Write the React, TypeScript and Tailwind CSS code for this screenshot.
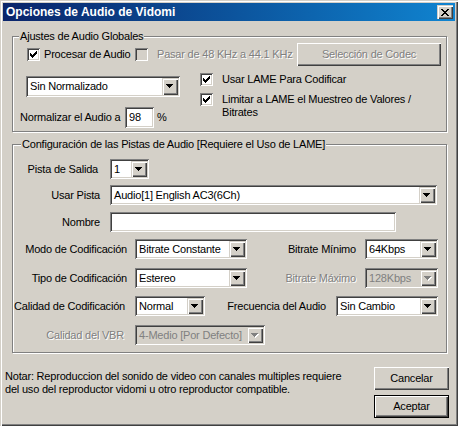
import type { ReactNode } from 'react'

const sunken =
  'shadow-[inset_1px_1px_0_#808080,inset_-1px_-1px_0_#fff,inset_2px_2px_0_#404040,inset_-2px_-2px_0_#D4D0C8]'
const raised =
  'shadow-[inset_1px_1px_0_#D4D0C8,inset_2px_2px_0_#fff,inset_-1px_-1px_0_#404040,inset_-2px_-2px_0_#808080]'
const etched = 'border border-[#808080] shadow-[1px_1px_0_#fff,inset_1px_1px_0_#fff]'
const dim = 'text-[#808080] [text-shadow:1px_1px_0_#fff]'

const ARROW = 'M0 0h7v1h-7zM1 1h5v1h-5zM2 2h3v1h-3zM3 3h1v1h-1z'

function Arrow({ disabled }: { disabled?: boolean }) {
  return (
    <svg width="8" height="5" viewBox="0 0 8 5" shapeRendering="crispEdges">
      {disabled && <path d={ARROW} fill="#fff" transform="translate(1 1)" />}
      <path d={ARROW} fill={disabled ? '#808080' : '#000'} />
    </svg>
  )
}

function Check({ checked, disabled }: { checked?: boolean; disabled?: boolean }) {
  return (
    <span
      className={`flex h-[13px] w-[13px] shrink-0 items-center justify-center ${sunken} ${
        disabled ? 'bg-[#D4D0C8]' : 'bg-white'
      }`}
    >
      {checked && (
        <svg width="7" height="7" viewBox="0 0 7 7" shapeRendering="crispEdges">
          <path d="M0 2h1v3h-1zM1 3h1v3h-1zM2 4h1v3h-1zM3 3h1v3h-1zM4 2h1v3h-1zM5 1h1v3h-1zM6 0h1v3h-1z" />
        </svg>
      )}
    </span>
  )
}

function Combo({ value, className, disabled }: { value: string; className: string; disabled?: boolean }) {
  return (
    <div className={`flex shrink-0 p-[2px] ${sunken} ${className} ${disabled ? 'bg-[#D4D0C8] text-[#808080]' : 'bg-white'}`}>
      <div className="flex flex-1 items-center overflow-hidden whitespace-nowrap pl-[2px]">{value}</div>
      <div className={`flex w-[16px] items-center justify-center bg-[#D4D0C8] ${raised}`}>
        <Arrow disabled={disabled} />
      </div>
    </div>
  )
}

function Edit({ value, className }: { value?: string; className: string }) {
  return (
    <div className={`flex shrink-0 items-center bg-white p-[2px] pl-[4px] ${sunken} ${className}`}>{value}</div>
  )
}

function Btn({ children, className, def, disabled }: { children: ReactNode; className: string; def?: boolean; disabled?: boolean }) {
  const face = (
    <div
      className={`flex h-full w-full items-center justify-center bg-[#D4D0C8] ${
        def
          ? 'shadow-[inset_1px_1px_0_#fff,inset_-1px_-1px_0_#404040,inset_-2px_-2px_0_#808080]'
          : 'shadow-[inset_1px_1px_0_#fff,inset_-1px_-1px_0_#404040,inset_-2px_-2px_0_#808080]'
      } ${disabled ? dim : ''}`}
    >
      {children}
    </div>
  )
  return <div className={`shrink-0 ${def ? 'border border-black' : ''} ${className}`}>{face}</div>
}

function CloseIcon() {
  return (
    <svg width="8" height="7" viewBox="0 0 8 7" shapeRendering="crispEdges">
      <path d="M0 0h2v1h-2zM6 0h2v1h-2zM1 1h2v1h-2zM5 1h2v1h-2zM2 2h4v1h-4zM3 3h2v1h-2zM2 4h4v1h-4zM1 5h2v1h-2zM5 5h2v1h-2zM0 6h2v1h-2zM6 6h2v1h-2z" />
    </svg>
  )
}

export default function App() {
  return (
    <div
      className={`h-[426px] w-[458px] bg-[#D4D0C8] p-[3px] font-['Liberation_Sans',Arial,sans-serif] text-[11px] leading-[13px] tracking-[-0.2px] text-black ${raised}`}
    >
      {/* title bar */}
      <div className="flex h-[18px] items-center justify-between bg-gradient-to-r from-[#0A246A] to-[#1084D0] pl-[3px] pr-[2px]">
        <span className="text-[12px] font-bold tracking-normal text-white">Opciones de Audio de Vidomi</span>
        <div className={`flex h-[14px] w-[16px] items-center justify-center bg-[#D4D0C8] ${raised}`}>
          <CloseIcon />
        </div>
      </div>

      {/* Ajustes de Audio Globales */}
      <div className={`relative ml-[9px] mt-[15px] h-[96px] w-[435px] ${etched}`}>
        <span className="absolute -top-[7px] left-[6px] bg-[#D4D0C8] px-[1px]">Ajustes de Audio Globales</span>

        <div className="mt-[6px] flex h-[23px] items-center">
          <div className="ml-[14px] flex w-[108px] items-center">
            <Check checked />
            <span className="ml-[4px]">Procesar de Audio</span>
          </div>
          <Check disabled />
          <span className={`ml-[9px] ${dim}`}>Pasar de 48 KHz a 44.1 KHz</span>
          <Btn disabled className="ml-auto mr-[5px] h-[23px] w-[144px]">
            Selección de Codec
          </Btn>
        </div>

        <div className="mt-[7px] flex">
          <div className="w-[187px]">
            <Combo value="Sin Normalizado" className="ml-[13px] mt-[3px] h-[21px] w-[154px]" />
            <div className="ml-[7px] mt-[10px] flex h-[21px] items-center">
              <span className="w-[105px]">Normalizar el Audio a</span>
              <Edit value="98" className="h-[21px] w-[29px]" />
              <span className="ml-[3px]">%</span>
            </div>
          </div>
          <div>
            <div className="flex items-start">
              <Check checked />
              <span className="ml-[9px]">Usar LAME Para Codificar</span>
            </div>
            <div className="mt-[7px] flex items-start">
              <Check checked />
              <span className="ml-[9px]">
                Limitar a LAME el Muestreo de Valores /<br />
                Bitrates
              </span>
            </div>
          </div>
        </div>
      </div>

      {/* Configuración de las Pistas */}
      <div className={`relative ml-[9px] mt-[12px] h-[209px] w-[435px] ${etched}`}>
        <span className="absolute -top-[7px] left-[8px] bg-[#D4D0C8] px-[1px]">
          Configuración de las Pistas de Audio [Requiere el Uso de LAME]
        </span>

        <div className="mt-[14px] flex h-[20px] items-center">
          <span className="w-[85px] text-right">Pista de Salida</span>
          <Combo value="1" className="ml-[12px] h-[20px] w-[39px]" />
        </div>
        <div className="mt-[6px] flex h-[20px] items-center">
          <span className="w-[87px] text-right">Usar Pista</span>
          <Combo value="Audio[1] English AC3(6Ch)" className="ml-[10px] h-[20px] w-[327px]" />
        </div>
        <div className="mt-[7px] flex h-[20px] items-center">
          <span className="w-[87px] text-right">Nombre</span>
          <Edit className="ml-[10px] h-[20px] w-[286px]" />
        </div>

        <div className="mt-[7px] flex h-[20px] items-center">
          <span className="w-[114px] whitespace-nowrap text-right">Modo de Codificación</span>
          <Combo value="Bitrate Constante" className="ml-[8px] h-[20px] w-[112px]" />
          <span className="w-[109px] text-right">Bitrate Mínimo</span>
          <Combo value="64Kbps" className="ml-[9px] h-[20px] w-[73px]" />
        </div>
        <div className="mt-[9px] flex h-[20px] items-center">
          <span className="w-[114px] whitespace-nowrap text-right">Tipo de Codificación</span>
          <Combo value="Estereo" className="ml-[8px] h-[20px] w-[112px]" />
          <span className={`w-[109px] text-right ${dim}`}>Bitrate Máximo</span>
          <Combo value="128Kbps" disabled className="ml-[9px] h-[20px] w-[73px]" />
        </div>
        <div className="mt-[8px] flex h-[20px] items-center">
          <span className="w-[112px] whitespace-nowrap text-right">Calidad de Codificación</span>
          <Combo value="Normal" className="ml-[10px] h-[20px] w-[70px]" />
          <span className="w-[121px] text-right">Frecuencia del Audio</span>
          <Combo value="Sin Cambio" className="ml-[10px] h-[20px] w-[102px]" />
        </div>
        <div className="mt-[9px] flex h-[20px] items-center">
          <span className={`w-[111px] text-right ${dim}`}>Calidad del VBR</span>
          <Combo value="4-Medio [Por Defecto]" disabled className="ml-[11px] h-[20px] w-[130px]" />
        </div>
      </div>

      {/* note + buttons */}
      <div className="mt-[14px] flex">
        <p className="ml-[2px] mt-[3px]">
          Notar: Reproduccion del sonido de video con canales multiples requiere
          <br />
          del uso del reproductor vidomi u otro reproductor compatible.
        </p>
        <div className="ml-auto mr-[6px] flex flex-col gap-[5px]">
          <Btn className="h-[23px] w-[75px]">Cancelar</Btn>
          <Btn def className="h-[23px] w-[75px]">
            Aceptar
          </Btn>
        </div>
      </div>
    </div>
  )
}
